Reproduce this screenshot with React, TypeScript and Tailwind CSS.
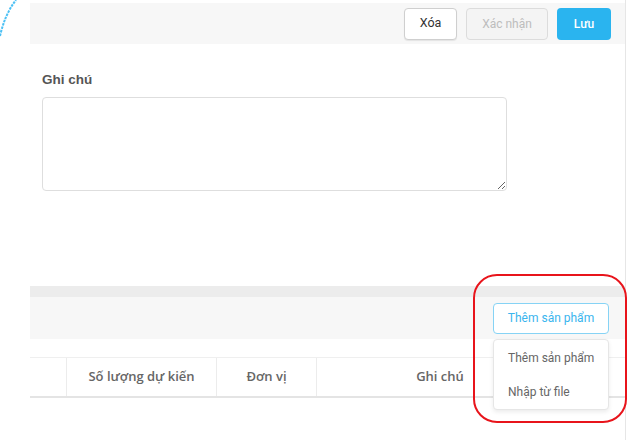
import React from "react";

export default function App() {
  const btnFont = { fontFamily: "Roboto, 'Liberation Sans', sans-serif" };
  return (
    <div
      className="relative w-[635px] h-[440px] bg-white overflow-hidden"
      style={{ fontFamily: "Roboto, 'Liberation Sans', sans-serif" }}
    >
      {/* dashed blue arc at top-left */}
      <svg className="absolute left-0 top-0" width="30" height="60" viewBox="0 0 30 60">
        <path d="M0 36 Q 5 14 16 0" fill="none" stroke="#4cc0f4" strokeWidth="2" strokeDasharray="2.5 1" />
      </svg>

      <div className="ml-[30px] w-[596px] h-full border-r border-[#e6e6e6] flex flex-col">
        {/* top action bar */}
        <div className="mt-[3px] h-[41px] bg-[#f7f7f7] flex items-center justify-end gap-[9px] pr-[14px]">
          <button
            className="h-[32px] w-[53px] rounded-[4px] border border-[#cfcfcf] bg-white text-[12.5px] text-[#333] shadow-[0_1px_1px_rgba(0,0,0,0.08)]"
            style={btnFont}
          >
            Xóa
          </button>
          <button
            className="h-[32px] w-[82px] rounded-[4px] border border-[#dcdcdc] bg-[#f4f4f4] text-[12px] text-[#bdbdbd]"
            style={btnFont}
          >
            Xác nhận
          </button>
          <button
            className="h-[32px] w-[54px] rounded-[4px] bg-[#2ab4ef] text-[12px] font-medium text-white"
            style={btnFont}
          >
            Lưu
          </button>
        </div>

        {/* note section */}
        <div className="pl-[12px] pt-[27px]">
          <div
            className="text-[13.5px] font-bold text-[#555] leading-[18px]"
            style={{ fontFamily: "'Liberation Sans', Arial, sans-serif" }}
          >
            Ghi chú
          </div>
          <textarea className="mt-[8px] block w-[465px] h-[94px] rounded-[4px] border border-[#dedede] bg-white resize-y outline-none" />
        </div>

        {/* product section bar */}
        <div className="mt-[95px] h-[11px] bg-[#ececec]" />
        <div className="h-[42px] bg-[#f7f7f7] flex items-center justify-end pr-[16px]">
          <button
            className="h-[31px] w-[116px] rounded-[4px] border border-[#86d3f5] bg-white text-[12px] text-[#3ab5ee]"
            style={btnFont}
          >
            Thêm sản phẩm
          </button>
        </div>

        {/* table header */}
        <div
          className="mt-[18px] h-[41px] border-t border-[#efefef] border-b-2 border-b-[#e4e4e4] flex text-[13px] font-semibold text-[#666]"
          style={{ fontFamily: "'Open Sans', 'Noto Sans', sans-serif" }}
        >
          <div className="w-[37px] border-r border-[#ececec]" />
          <div className="w-[150px] border-r border-[#ececec] flex items-center justify-center">Số lượng dự kiến</div>
          <div className="w-[100px] border-r border-[#ececec] flex items-center justify-center">Đơn vị</div>
          <div className="w-[246px] flex items-center justify-center">Ghi chú</div>
          <div className="flex-1" />
        </div>
      </div>

      {/* dropdown menu */}
      <div
        className="absolute left-[493px] top-[339px] w-[116px] h-[71px] rounded-[4px] border border-[#e6e6e6] bg-white shadow-[0_2px_4px_rgba(0,0,0,0.08)] flex flex-col justify-center gap-[20px] pl-[14px] text-[12px] text-[#666]"
        style={btnFont}
      >
        <div className="leading-[14px]">Thêm sản phẩm</div>
        <div className="leading-[14px]">Nhập từ file</div>
      </div>

      {/* red annotation */}
      <div className="absolute left-[473px] top-[274px] w-[154px] h-[149px] rounded-[24px] border-2 border-[#e8141b] pointer-events-none" />
    </div>
  );
}
